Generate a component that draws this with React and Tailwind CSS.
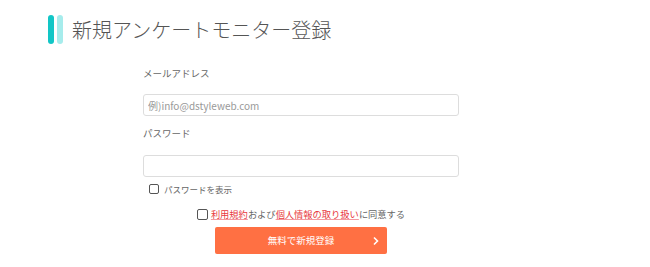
import React, { useState } from "react";

function App() {
  const [showPw, setShowPw] = useState(false);
  const [agree, setAgree] = useState(false);

  return (
    <div className="w-[650px] h-[267px] bg-white text-[#666] font-['Noto_Sans_CJK_JP',sans-serif] overflow-hidden">
      {/* Heading */}
      <div className="flex items-center pt-[15px] pl-[48px]">
        <div className="flex gap-[3px]">
          <span className="block w-[6px] h-[29px] rounded-full bg-[#12c6c6]" />
          <span className="block w-[6px] h-[29px] rounded-full bg-[#a6ecec]" />
        </div>
        <h1 className="ml-[9px] text-[20px] leading-[29px] text-[#555] font-light">
          新規アンケートモニター登録
        </h1>
      </div>

      {/* Form */}
      <div className="ml-[143px] w-[316px] mt-[21px]">
        <label className="block text-[9.5px] leading-[16px]">メールアドレス</label>
        <input
          type="email"
          placeholder="例)info@dstyleweb.com"
          className="mt-[13px] block w-full h-[22px] px-[4px] border border-[#ddd] rounded-[3px] text-[10px] placeholder:text-[#999] outline-none"
        />

        <label className="block mt-[9px] text-[9.5px] leading-[16px]">パスワード</label>
        <input
          type={showPw ? "text" : "password"}
          className="mt-[14px] block w-full h-[22px] px-[4px] border border-[#ddd] rounded-[3px] text-[10px] outline-none"
        />

        <label className="flex items-center mt-[5px] ml-[6px] gap-[5px] text-[8.5px] leading-[14px] cursor-pointer">
          <input
            type="checkbox"
            checked={showPw}
            onChange={() => setShowPw(!showPw)}
            className="appearance-none w-[10px] h-[10px] border border-[#555] rounded-[2px] checked:bg-[#555]"
          />
          パスワードを表示
        </label>

        <div className="flex justify-center mt-[10px]">
          <label className="flex items-center gap-[3px] text-[9.25px] leading-[16px] cursor-pointer">
            <input
              type="checkbox"
              checked={agree}
              onChange={() => setAgree(!agree)}
              className="appearance-none w-[11px] h-[11px] border border-[#555] rounded-[2px] checked:bg-[#555]"
            />
            <span>
              <a href="#" className="text-[#e8383d] underline decoration-[#f39aa0]">利用規約</a>
              および
              <a href="#" className="text-[#e8383d] underline decoration-[#f39aa0]">個人情報の取り扱い</a>
              に同意する
            </span>
          </label>
        </div>

        <div className="flex justify-center mt-[5px]">
          <button className="relative w-[172px] h-[27px] rounded-[2px] bg-[#ff7043] text-white text-[9.5px]">
            無料で新規登録
            <svg
              className="absolute right-[8px] top-1/2 -translate-y-1/2"
              width="6"
              height="9"
              viewBox="0 0 6 9"
              fill="none"
              stroke="white"
              strokeWidth="1.6"
            >
              <path d="M1 1l3.5 3.5L1 8" />
            </svg>
          </button>
        </div>
      </div>
    </div>
  );
}

export default App;
